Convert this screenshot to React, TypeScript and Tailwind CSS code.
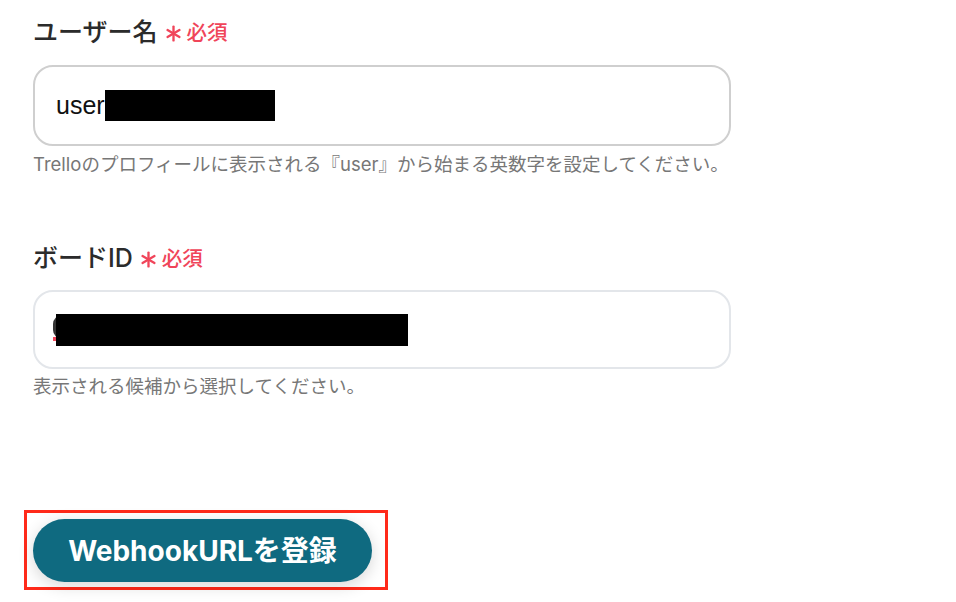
import React from 'react';

const jp = "font-['Inter','Noto_Sans_CJK_JP',sans-serif]";

const Required: React.FC = () => (
  <span className="ml-[7px] inline-flex items-center text-[20.5px] font-medium text-[#f0455a]">
    <svg width="17" height="17" viewBox="0 0 16 16" className="mr-[5px]">
      <g stroke="#f0455a" strokeWidth="2.2" strokeLinecap="round">
        <line x1="8" y1="1.5" x2="8" y2="14.5" />
        <line x1="2.4" y1="4.8" x2="13.6" y2="11.2" />
        <line x1="2.4" y1="11.2" x2="13.6" y2="4.8" />
      </g>
    </svg>
    必須
  </span>
);

export default function App() {
  return (
    <div className={`min-h-[602px] w-[956px] bg-white pl-[33px] ${jp}`}>
      <div className="w-[698px] pt-[17px]">
        <label className="flex h-[32px] items-center text-[25px] font-medium text-[#2b2b2b]">
          ユーザー名
          <Required />
        </label>
        <div className="mt-[16px] flex h-[81px] items-center rounded-[20px] border-2 border-[#cfcfcf] px-[21px]">
          <span className="font-['Liberation_Sans',sans-serif] text-[25px] text-[#111]">user</span>
          <span className="h-[31px] w-[170px] bg-black" />
        </div>
        <p className="mt-[6px] text-[18.5px] leading-[24px] text-[#777]">
          Trelloのプロフィールに表示される『user』から始まる英数字を設定してください。
        </p>

        <label className="mt-[67px] flex h-[32px] items-center text-[25px] font-medium text-[#2b2b2b]">
          ボードID
          <Required />
        </label>
        <div className="relative mt-[15px] flex h-[79px] items-center rounded-[20px] border-2 border-[#e3e6ea] pl-[21px]">
          <span className="absolute left-[18px] top-[23px] h-[24px] w-[18px] rounded-full border-[3px] border-[#333]" />
          <span className="relative h-[32px] w-[352px] bg-black" />
          <span className="absolute left-[18px] top-[45px] h-[4px] w-[3px] bg-[#f0455a]" />
        </div>
        <p className="mt-[5px] text-[18.5px] leading-[24px] text-[#777]">
          表示される候補から選択してください。
        </p>
      </div>

      <div className="ml-[-9px] mt-[112px] inline-block border-[3px] border-[#ff2a1a] pb-[5px] pl-[6px] pr-[13px] pt-[6px]">
        <button className="flex h-[63px] w-[339px] items-center justify-center rounded-full bg-[#0f6a80] text-[28px] font-bold text-white shadow-[0_4px_16px_rgba(0,0,0,0.16)]">
          WebhookURLを登録
        </button>
      </div>
    </div>
  );
}
